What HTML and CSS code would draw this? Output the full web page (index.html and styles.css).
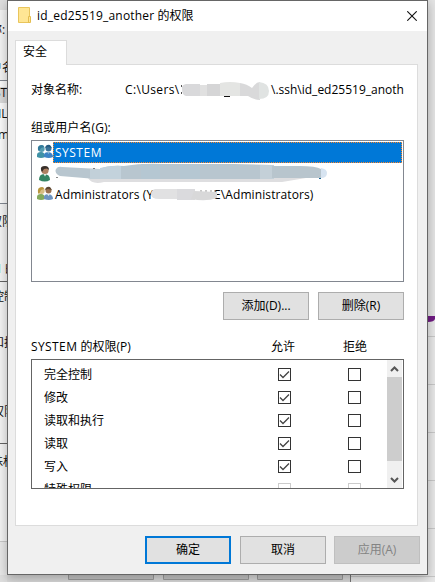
FILE: index.html
```html
<!DOCTYPE html>
<html lang="zh-CN">
<head>
<meta charset="utf-8">
<title>id_ed25519_another 的权限</title>
<link rel="stylesheet" href="styles.css">
</head>
<body>
<svg class="backdrop" width="435" height="582" aria-hidden="true">
  <rect width="435" height="582" fill="#e8e8e8"/>
  <rect width="8" height="541" fill="#f3f3f3"/>
  <rect width="8" height="10" fill="#ddd"/>
  <rect y="81" width="8" height="123" fill="#fafafa"/>
  <rect y="87" width="8" height="16" fill="#d9d9d9"/>
  <path d="M0 80.5H8M0 203.5H8" stroke="#828790"/>
  <path d="M0 281.5H8M0 443.5H8" stroke="#646464"/>
  <path d="M0 541.5H8" stroke="#c8c8c8"/>
  <rect y="264" width="1" height="9" fill="#bdeeee"/>
  <g class="backdrop-text">
    <text x="-10" y="34">称:</text><text x="-10" y="72">户</text><text x="2" y="72">名</text>
    <text x="-6" y="97">STE</text><text x="-2" y="118">IL</text><text x="-2" y="139">mi</text>
    <text x="-10" y="226">权限</text><text x="5" y="273">的</text><text x="-8" y="301">控制</text>
    <text x="-8" y="347">和执</text><text x="-8" y="416">权限</text><text x="-9" y="466">殊权</text>
  </g>
  <rect x="428" y="0" width="7" height="318" fill="#e4e4e4"/>
  <path d="M428 316H435V319Q434 322 428 322Z" fill="#701b83"/>
  <path d="M428 336.5H435M428 384.5H435M428 432.5H435M428 480.5H435M428 528.5H435M351 576.5H435" stroke="#c8c8c8"/>
  <rect y="575" width="350" height="7" fill="#d8d8d8"/>
  <path d="M0 575H7V582H0Z" fill="#dedede"/>
  <path d="M68.500 574V579.500H153.500V574M163.500 574V579.500H248.500V574M257.500 574V579.500H342.500V574" fill="#c4c4c4" stroke="#9b9b9b"/>
  <path d="M350.500 575V582" stroke="#777"/>
</svg>

<main class="dialog">
  <header class="titlebar">
    <svg class="folder" width="14" height="17" viewBox="0 0 14 17"><path d="M.5.500h11v15H.5z" fill="#ffe694" stroke="#e9c55c"/><path d="M10.500 9.500h2v6h-2z" fill="#ffe694" stroke="#e5be50"/></svg>
    <h1><span class="latin">id_ed25519_another</span> 的权限</h1>
    <svg class="close" width="10" height="10" viewBox="0 0 10 10"><path d="M.3.300l9.400 9.400M9.700.300L.3 9.700" stroke="#111" stroke-width="1.100"/></svg>
  </header>

  <div class="tabs"><div class="tab">安全</div></div>

  <section class="panel">
    <div class="object-row">
      <span class="object-label">对象名称:</span>
      <span class="path-start">C:\Users\</span>
      <span class="path-end">\.ssh\id_ed25519_anoth</span>
      <svg class="smudge smudge-path" width="96" height="22" viewBox="0 0 96 22">
        <path d="M1.500 4V6M1.500 11V13" stroke="#555"/>
        <path d="M6 3Q1 4 2 8Q2 14 6 15H20V3Z" fill="#d9d9db"/><path d="M20 4H28V15H20Z" fill="#e0e0e0"/><path d="M27 3H40V15H27Z" fill="#d5d5d6"/><path d="M40 2Q50 0 60 2V15H40Z" fill="#e4e5e3"/><path d="M60 2Q67 3 72 7Q76 1 80 1V19Q74 19 68 15H60Z" fill="#d9d9da"/><path d="M79 1Q89 2 89 10Q89 18 79 18Z" fill="#e0e3e2"/><path d="M44 15.500H50" stroke="#111"/>
      </svg>
    </div>
    <div class="group-label">组或用户名(G):</div>

    <div class="users">
      <div class="user selected">
        <svg class="avatar" width="16" height="16" viewBox="0 0 16 16"><path d="M0 13V11Q0 8 4 8Q8 8 8 13Q4 15 0 13Z" fill="#3f91a6"/><circle cx="4.500" cy="4.800" r="3.200" fill="#569db2"/><path d="M1 6Q0 1 5 1Q7 1 7 3L4 4 2 7Z" fill="#317a9b"/><path d="M7 13V11Q7 8 12 8Q16 9 16 13Q12 15 7 13Z" fill="#3d83c4"/><circle cx="11.500" cy="4.500" r="3" fill="#3b7298"/><path d="M8 4Q9 0 13 1L15 4 11 3Z" fill="#245b82"/><path d="M10 8L11.500 10 13 8" fill="#8dbbd8"/></svg>
        <span class="name">SYSTEM</span>
      </div>
      <div class="user">
        <svg class="avatar" width="16" height="18" viewBox="0 0 16 18"><path d="M2 15Q2 9 7 9Q13 9 13 15Q8 18 2 15Z" fill="#348463"/><circle cx="8" cy="5.500" r="3.600" fill="#ad8062"/><path d="M4 5Q3 1 8 1Q12 1 12 5L10 3.500 7 4 5 7Z" fill="#382f29"/><path d="M6.500 9L8 11.500 9.500 9Z" fill="#e7eee8"/></svg>
        <svg class="smudge smudge-user" width="276" height="22" viewBox="0 0 276 22">
          <path d="M34 15Q38 22 50 19L158 19H228L252 15Z" fill="#dedee0"/>
          <path d="M2 6Q4 3 8 4L46 6Q53 2 70 3Q88 0 109 1H180L218 2V16H42L6 13Q0 10 2 6Z" fill="#b8c6cf"/>
          <path d="M36 6H46V16H36Z" fill="#c2d0d9"/><path d="M46 5Q62 2 67 3V16H46Z" fill="#c3d2dc"/><path d="M87 1H106V16H87ZM126 1H146V16H126Z" fill="#b5c7d2"/><path d="M206 2H220V16H206Z" fill="#c4d0d8"/>
          <path d="M218 3H246Q262 3 267 6V15H218Z" fill="#b8c5cd"/><path d="M267 5Q273 6 273 10Q273 15 267 15Z" fill="#d7e4f1"/><path d="M265 15H267V16H265Z" fill="#176493"/><path d="M2.500 14.500H3.500M40 5V6" stroke="#111"/>
        </svg>
      </div>
      <div class="user">
        <svg class="avatar" width="16" height="16" viewBox="0 0 16 16"><path d="M0 13V11Q0 8 4 8Q8 8 8 13Q4 15 0 13Z" fill="#84a95c"/><circle cx="4.500" cy="4.800" r="3.200" fill="#d8bd83"/><path d="M1 7Q0 1 5 1Q7 1 7 3L4 4 2 8Z" fill="#b8963d"/><path d="M7 13V11Q7 8 12 8Q16 9 16 13Q12 15 7 13Z" fill="#6d94c1"/><circle cx="11.500" cy="4.500" r="3" fill="#9a704f"/><path d="M8 4Q9 0 13 1L15 4 11 3Z" fill="#5d4632"/><path d="M10 8L11.500 10 13 8" fill="#e7edf2"/></svg>
        <span class="name admin-start">Administrators (Y</span><span class="name admin-end">E\Administrators)</span>
        <svg class="smudge smudge-admin" width="72" height="14" viewBox="0 0 72 14"><path d="M50 2v2M55 2v2M60 2v3M64 2v2" stroke="#777" stroke-width=".8"/><path d="M4 1H27V11H8Q0 11 0 6Q0 2 4 1Z" fill="#e1e1e2"/><path d="M26 1H44V12H26Z" fill="#dadadd"/><path d="M43 3L66 4V10Q55 14 40 11Z" fill="#d8d8d9"/></svg>
      </div>
    </div>

    <div class="actions"><button class="btn">添加(D)...</button><button class="btn">删除(R)</button></div>

    <div class="perm-head"><span class="perm-title"><span class="caps">SYSTEM</span> 的权限(P)</span><span>允许</span><span>拒绝</span></div>
    <div class="perms">
      <div class="perm-list">
        <div class="perm"><span>完全控制</span><b class="box on"></b><b class="box"></b></div>
        <div class="perm"><span>修改</span><b class="box on"></b><b class="box"></b></div>
        <div class="perm"><span>读取和执行</span><b class="box on"></b><b class="box"></b></div>
        <div class="perm"><span>读取</span><b class="box on"></b><b class="box"></b></div>
        <div class="perm"><span>写入</span><b class="box on"></b><b class="box"></b></div>
        <div class="perm"><span>特殊权限</span><b class="box off"></b><b class="box off"></b></div>
      </div>
      <div class="scrollbar">
        <svg width="15" height="17" viewBox="0 0 15 17"><path d="M4 11L7.500 7.500 11 11" fill="none" stroke="#555" stroke-width="2"/></svg>
        <div class="thumb"></div>
        <svg width="15" height="17" viewBox="0 0 15 17"><path d="M4 7L7.500 10.500 11 7" fill="none" stroke="#555" stroke-width="2"/></svg>
      </div>
    </div>
  </section>

  <footer class="footer">
    <button class="btn primary">确定</button><button class="btn">取消</button><button class="btn" disabled>应用(A)</button>
  </footer>
</main>
<script>
  // Draw the tick inside each granted permission.
  document.querySelectorAll('.box.on').forEach(function (box) {
    box.innerHTML = '<svg width="11" height="11" viewBox="0 0 11 11"><path d="M1 5.500L4 8.500 10 2.500" fill="none" stroke="#444" stroke-width="1.300"/></svg>';
  });
</script>
</body>
</html>
```
FILE: styles.css
```css
* { box-sizing: border-box; }
body {
  margin: 0;
  width: 435px;
  height: 582px;
  overflow: hidden;
  position: relative;
  font: 12px/16px "Open Sans", "Noto Sans CJK SC", sans-serif;
  color: #000;
}
.backdrop { position: absolute; left: 0; top: 0; }
.backdrop-text { font-size: 12px; fill: #111; }
.dialog {
  position: relative;
  margin-left: 7px;
  width: 421px;
  height: 575px;
  border: 1px solid #666;
  background: #f0f0f0;
  box-shadow: 0 3px 10px rgba(0, 0, 0, .28);
}
.titlebar {
  display: flex;
  align-items: center;
  height: 30px;
  padding: 0 10px;
  background: #fff;
}
.folder { margin-top: -2px; }
.titlebar h1 { flex: 1; margin: 0 0 0 5px; font-size: 12px; font-weight: 400; white-space: nowrap; }
.latin { letter-spacing: .2px; }
.tabs { padding: 9px 0 0 7px; height: 34px; }
.tab {
  position: relative;
  z-index: 1;
  width: 52px;
  height: 25px;
  padding: 3px 0 0 7px;
  border: 1px solid #dcdcdc;
  border-bottom: 0;
  background: #fff;
}
.panel {
  width: 403px;
  height: 462px;
  margin: -1px 0 0 7px;
  padding: 17px 0 0 15px;
  border: 1px solid #dcdcdc;
  background: #fff;
}
.object-row { position: relative; display: flex; height: 16px; white-space: nowrap; }
.object-label { width: 94px; }
.path-start { width: 146px; letter-spacing: .35px; }
.smudge { position: absolute; }
.smudge-path { left: 149px; top: -1px; }
.group-label { margin-top: 22px; letter-spacing: .1px; }
.users { width: 373px; height: 142px; margin-top: 4px; padding: 1px; border: 1px solid #828790; }
.user { position: relative; display: flex; height: 21px; padding-left: 4px; }
.avatar { width: 16px; margin-top: 2px; flex: none; }
.name { padding: 2px 0 0 2px; white-space: nowrap; line-height: 17px; }
.selected .name {
  flex: 1;
  padding: 1px 0 0 1px;
  background: #0078d7;
  color: #fff;
  outline: 1px dotted #ff8728;
  outline-offset: -1px;
  padding: 2px 0 0 2px;
  letter-spacing: .5px;
}
.caps { letter-spacing: .4px; }
.smudge-user { left: 21px; top: 0; }
.admin-start { width: 130px; letter-spacing: .1px; }
.admin-end { margin-left: 29px; letter-spacing: .1px; }
.smudge-admin { left: 118px; top: 4px; }
.actions { display: flex; gap: 9px; margin: 10px 0 0 192px; }
.btn {
  width: 86px;
  height: 28px;
  padding: 0;
  border: 1px solid #adadad;
  background: #e1e1e1;
  color: #000;
  font: inherit;
}
.btn.primary { border: 2px solid #0078d7; }
.btn:disabled { border-color: #bfbfbf; background: #ccc; color: #838383; }
.perm-head { display: grid; grid-template-columns: 240px 72px 24px; margin-top: 19px; height: 20px; white-space: nowrap; }
.perms { display: flex; width: 373px; height: 130px; border: 1px solid #646464; overflow: hidden; }
.perm-list { width: 355px; padding-top: 3px; }
.perm { display: grid; grid-template-columns: 234px 70px 13px; align-items: center; height: 23px; padding-left: 12px; }
.box { display: block; width: 13px; height: 13px; border: 1px solid #333; background: #fff; }
.box svg { display: block; }
.box.off { border-color: #ccc; }
.scrollbar { display: flex; flex-direction: column; width: 15px; background: #f0f0f0; }
.scrollbar svg:last-child { margin-top: 10px; }
.thumb { height: 84px; flex: none; background: #cdcdcd; }
.footer { display: flex; gap: 9px; margin: 10px 0 0 137px; }
.footer .btn:last-child { margin-left: -1px; }
```
